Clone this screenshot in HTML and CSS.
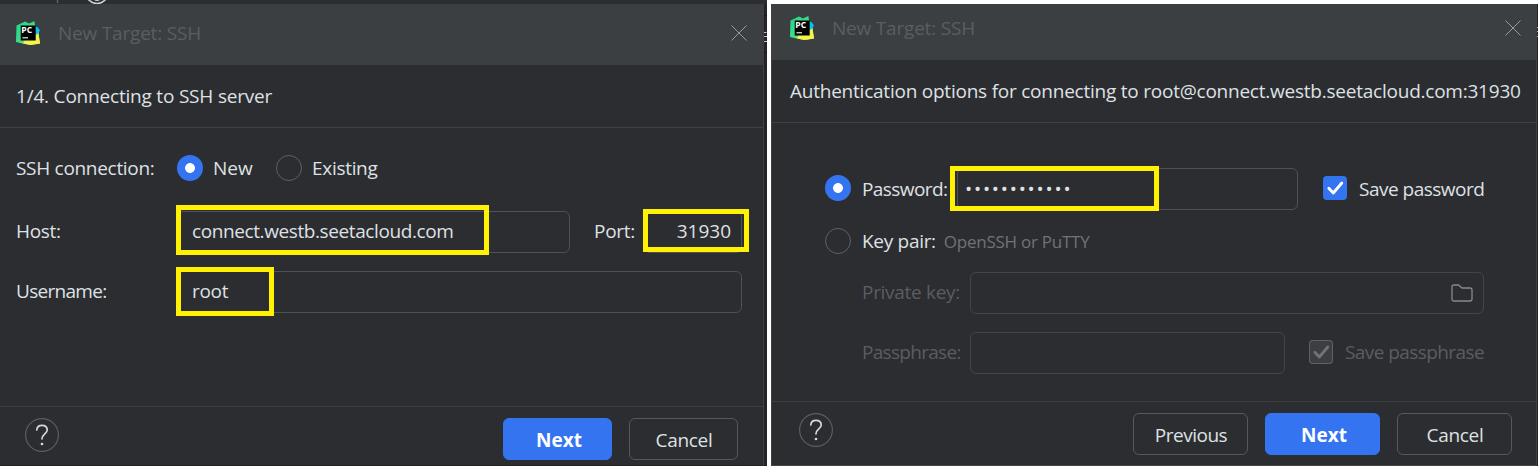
FILE: index.html
```html
<!DOCTYPE html>
<html lang="en">
<head>
<meta charset="utf-8">
<title>New Target: SSH</title>
<link rel="stylesheet" href="styles.css">
</head>
<body>
<svg class="defs" width="0" height="0" aria-hidden="true">
  <defs>
    <linearGradient id="g" x1="0" y1="0" x2="1" y2="1">
      <stop offset="0" stop-color="#21d789"/><stop offset=".5" stop-color="#3fdc85"/><stop offset="1" stop-color="#fcf84a"/>
    </linearGradient>
    <symbol id="logo" viewBox="0 0 24 24">
      <path d="M.5 4.5 9 .5 13 2.5 18.3 0 19.2 5 22 8 24 22.5 14.5 24 5.5 22.3 0 21Z" fill="url(#g)"/>
      <path d="M9 19 20 9 22 11 24 22.5 14.5 24 7 22.5Z" fill="#f2f34d"/>
      <path d="M18 5 21.5 6 24 9.5 21 13.5 18 14Z" fill="#07c3f2"/>
      <path d="M4.7 4.5H19.7V19.5H4.7Z" fill="#000"/>
      <path d="M6.5 16.8H12" stroke="#fff" stroke-width="1.1"/>
      <text x="5.3" y="12" class="logo-text">PC</text>
    </symbol>
    <symbol id="close" viewBox="0 0 16 16"><path d="M.5.5 15.5 15.5M15.5.5.5 15.5" stroke="#a3a5a7" stroke-width=".9"/></symbol>
    <symbol id="check" viewBox="0 0 24 24"><path d="M5.8 12.2 10.3 17 18.8 7" fill="none" stroke="currentColor" stroke-width="2.8" stroke-linecap="round" stroke-linejoin="round"/></symbol>
    <symbol id="help" viewBox="0 0 34 34">
      <circle cx="17" cy="17" r="16.4" fill="none" stroke="#5a5d63" stroke-width="1.2"/>
      <path d="M11.8 12C12 9 14.2 7.3 17 7.3 20.2 7.3 22.2 9.3 22.2 12 22.2 15.8 17 16.2 17 20.8" fill="none" stroke="#d5d7dc" stroke-width="1.7" stroke-linecap="round"/>
      <circle cx="17" cy="26" r="1.35" fill="#d5d7dc"/>
    </symbol>
  </defs>
</svg>

<main class="stage">
  <section class="half half-left">
    <div class="backdrop-top">
      <svg width="120" height="4" viewBox="0 0 120 4"><path d="M57.5 0V3" stroke="#5a5d63" stroke-width="1.5"/><circle cx="97" cy="-7.5" r="11" fill="none" stroke="#ced0d6" stroke-width="1.6"/><circle cx="97" cy="-4" r="5" fill="#ced0d6"/></svg>
    </div>
    <div class="dialog-row">
      <div class="dialog">
        <header class="titlebar">
          <svg class="logo"><use href="#logo"/></svg>
          <span class="title">New Target: SSH</span>
          <svg class="close"><use href="#close"/></svg>
        </header>
        <h1 class="heading">1/4. Connecting to SSH server</h1>
        <div class="form form-server">
          <div class="row row-type">
            <span class="label ls-30">SSH connection:</span>
            <span class="radio on"></span><span class="option option-new">New</span>
            <span class="radio"></span><span class="option ls-30">Existing</span>
          </div>
          <div class="row row-host">
            <span class="label ls-30">Host:</span>
            <div class="field field-host"><span class="ls-38">connect.westb.seetacloud.com</span><i class="mark mark-host"></i></div>
            <span class="port-label ls-30">Port:</span>
            <div class="field field-port"><span>31930</span><i class="mark mark-port"></i></div>
          </div>
          <div class="row row-user">
            <span class="label ls-70">Username:</span>
            <div class="field field-user"><span class="ls-30">root</span><i class="mark mark-user"></i></div>
          </div>
        </div>
        <footer class="footer">
          <svg class="help"><use href="#help"/></svg>
          <button class="btn primary">Next</button>
          <button class="btn ls-30">Cancel</button>
        </footer>
      </div>
      <div class="backdrop-side">
        <svg width="3" height="60" viewBox="0 0 3 60"><path d="M0 11.5H3M0 48.5H3" stroke="#16171a"/><path d="M0 28.5H2.5M0 32.5H3M0 37.5H3" stroke="#c5c7cc"/></svg>
      </div>
    </div>
  </section>

  <section class="half half-right">
    <div class="dialog">
      <header class="titlebar">
        <svg class="logo"><use href="#logo"/></svg>
        <span class="title">New Target: SSH</span>
        <svg class="close"><use href="#close"/></svg>
      </header>
      <h1 class="heading">Authentication options for connecting to root@connect.westb.seetacloud.com:31930</h1>
      <div class="form form-auth">
        <div class="row row-password">
          <span class="radio on"></span>
          <span class="auth-label ls-60">Password:</span>
          <div class="field field-password"><span class="dots">••••••••••••</span><i class="mark mark-password"></i></div>
          <span class="checkbox"><svg><use href="#check"/></svg></span>
          <span class="ls-50">Save password</span>
        </div>
        <div class="row row-keypair">
          <span class="radio"></span>
          <span class="auth-label ls-30">Key pair:</span>
          <span class="hint">OpenSSH or PuTTY</span>
        </div>
        <div class="row row-key disabled">
          <span class="key-label ls-30">Private key:</span>
          <div class="field field-key">
            <svg class="folder" viewBox="0 0 22 18"><path d="M1 3Q1 1 3 1H7.5L11 4H19Q21 4 21 6V15Q21 17 19 17H3Q1 17 1 15Z" fill="none" stroke="#868a91" stroke-width="1.3"/></svg>
          </div>
        </div>
        <div class="row row-phrase disabled">
          <span class="key-label ls-70">Passphrase:</span>
          <div class="field field-phrase"></div>
          <span class="checkbox"><svg><use href="#check"/></svg></span>
          <span class="save-phrase ls-60">Save passphrase</span>
        </div>
      </div>
      <footer class="footer">
        <svg class="help"><use href="#help"/></svg>
        <button class="btn ls-50">Previous</button>
        <button class="btn primary">Next</button>
        <button class="btn ls-30">Cancel</button>
      </footer>
    </div>
    <div class="backdrop-side">
      <svg width="1" height="60" viewBox="0 0 1 60"><path d="M0 23.5H1M0 27.5H1M0 32.5H1" stroke="#a5a7ac"/></svg>
    </div>
  </section>
</main>
</body>
</html>
```
FILE: styles.css
```css
* { box-sizing: border-box; }
body {
  margin: 0;
  background: #fff;
  color: #dfe1e5;
  font: 19px/26px "Open Sans", "Noto Sans", sans-serif;
  white-space: nowrap;
  overflow: hidden;
}
.defs { position: absolute; }
.stage { display: flex; gap: 4px; height: 466px; }
.half-left { width: 767px; background: #26272b; }
.half-right { display: flex; width: 767px; padding-top: 4px; }
.backdrop-top { height: 4px; background: #2b2d30; }
.backdrop-top svg, .backdrop-side svg { display: block; }
.dialog-row { display: flex; height: 462px; }
.backdrop-side { flex: 1; background: #232428; }
.dialog {
  display: flex;
  flex-direction: column;
  width: 764px;
  height: 462px;
  background: #2b2d30;
  border-right: 1px solid #3d3f43;
  border-bottom: 1px solid #2a2025;
}
.half-right .dialog { width: 766px; border-left: 1px solid #3d3f43; border-bottom-color: #4a4345; }

.titlebar {
  display: flex;
  align-items: center;
  height: 61px;
  padding: 0 16px 3px 16px;
  background: #3c3f41;
}
.half-right .titlebar { height: 56px; padding: 0 15px 8px 18px; }
.logo { width: 24px; height: 24px; }
.logo-text { font: bold 8.6px "Open Sans", sans-serif; fill: #fff; }
.title { flex: 1; margin-left: 18px; color: #5a5d61; letter-spacing: -0.2px; }
.close { width: 16px; height: 16px; }

.heading {
  height: 63px;
  margin: 0;
  padding: 18px 0 0 16px;
  border-bottom: 1px solid #3f4145;
  font-size: 19px;
  font-weight: 400;
  letter-spacing: -0.2px;
}
.half-right .heading { padding-left: 18px; letter-spacing: -0.23px; }

.form { flex: 1; }
.row { display: flex; align-items: center; height: 42px; }
.label { width: 177px; padding-left: 16px; }
.form-server { padding-top: 19px; }
.row-host { margin-top: 22px; }
.row-user { margin-top: 18px; }
.row-host span, .row-user span { margin-bottom: 2px; }
.radio {
  width: 26px;
  height: 26px;
  border: 1px solid #5e6167;
  border-radius: 50%;
}
.radio.on {
  border: 0;
  background: radial-gradient(circle, #fff 4.5px, #3574f0 5.3px);
}
.option { margin-left: 10px; }
.option-new { width: 63px; }

.field {
  position: relative;
  display: flex;
  align-items: center;
  height: 42px;
  border: 1px solid #4e5157;
  border-radius: 6px;
}
.field-host { width: 393px; padding-left: 14px; }
.port-label { width: 74px; padding-left: 24px; }
.field-port { width: 98px; padding-right: 10px; justify-content: flex-end; }
.field-user { width: 565px; padding-left: 14px; }

.mark { position: absolute; border: 5px solid #fff200; }
.mark-host { left: -2px; top: -7px; width: 313px; height: 50px; }
.mark-port { left: -2px; top: -3px; width: 106px; height: 43px; }
.mark-user { left: -2px; top: -5px; width: 98px; height: 49px; }
.mark-password { left: -8px; top: -3px; width: 209px; height: 45px; }

.form-auth { padding: 45px 0 0 53px; }
.auth-label { margin-left: 11px; }
.row-password .auth-label { width: 95px; }
.row-password .radio, .row-password .checkbox { margin-bottom: 2px; }
.field-password { width: 341px; margin-right: 25px; padding-left: 7px; }
.dots { letter-spacing: 1.8px; }
.row-keypair { height: 26px; margin-top: 18px; }
.hint { margin: 2px 0 0 8px; color: #6f737a; font-size: 17px; letter-spacing: -0.25px; }
.row-key { margin-top: 18px; padding-left: 37px; }
.row-phrase { margin-top: 18px; padding-left: 37px; }
.key-label { width: 108px; margin-bottom: 2px; }
.save-phrase { margin-bottom: 2px; }
.field-key { width: 514px; padding-right: 10px; justify-content: flex-end; }
.field-phrase { width: 315px; margin-right: 24px; }
.folder { width: 22px; height: 18px; }
.disabled { color: #5a5d63; }
.disabled .field { border-color: #43454a; }
.checkbox {
  width: 24px;
  height: 24px;
  margin-right: 12px;
  border-radius: 4px;
  background: #3574f0;
  color: #fff;
}
.row-phrase .checkbox { margin-bottom: 2px; }
.checkbox svg { display: block; width: 24px; height: 24px; }
.disabled .checkbox { background: #3c3e42; color: #6f737a; box-shadow: inset 0 0 0 1px #5e6167; }

.footer {
  display: flex;
  gap: 17px;
  height: 59px;
  padding: 11px 25px 0;
  border-top: 1px solid #3c3e42;
}
.half-right .footer { height: 64px; padding: 11px 24px 0 27px; }
.help { width: 34px; height: 34px; margin-right: auto; }
.btn {
  width: 109px;
  height: 42px;
  padding: 1px 0 0 1px;
  border: 1px solid #55585e;
  border-radius: 6px;
  background: none;
  color: #dfe1e5;
  font: inherit;
}
.half-right .btn { width: 115px; }
.btn.primary { padding-left: 3px; border-color: #3574f0; background: #3574f0; color: #fff; font-weight: 700; }

.btn.ls-30, .ls-30 { letter-spacing: -0.3px; }
.ls-38 { letter-spacing: -0.4px; }
.btn.ls-50, .ls-50 { letter-spacing: -0.5px; }
.ls-60 { letter-spacing: -0.58px; }
.ls-70 { letter-spacing: -0.7px; }
```
